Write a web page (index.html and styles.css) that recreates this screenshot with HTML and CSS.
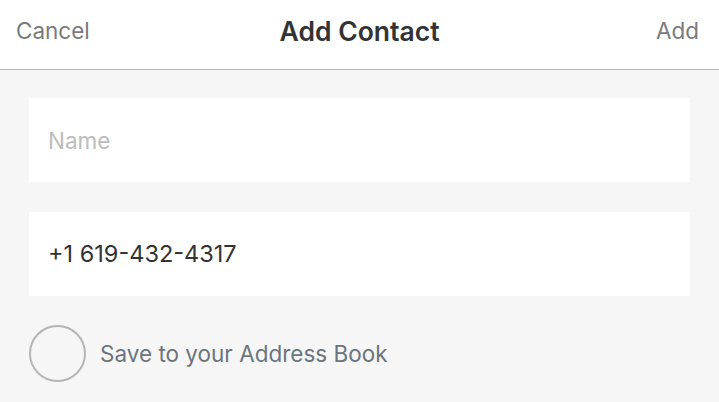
FILE: index.html
```html
<!DOCTYPE html>
<html>
<head>
<meta charset="utf-8">
<link rel="stylesheet" href="styles.css">
</head>
<body>
<div class="screen">
  <header class="nav">
    <span class="nav-btn nav-left">Cancel</span>
    <span class="nav-title">Add Contact</span>
    <span class="nav-btn nav-right">Add</span>
  </header>
  <main class="content">
    <div class="field"><span class="placeholder">Name</span></div>
    <div class="field"><span class="value">+1 619-432-4317</span></div>
    <label class="save-row">
      <span class="check"></span>
      <span class="save-text">Save to your Address Book</span>
    </label>
  </main>
</div>
</body>
</html>
```
FILE: styles.css
```css
html, body {
  margin: 0;
  padding: 0;
}
body {
  font-family: Inter, "Liberation Sans", sans-serif;
  background: #f6f6f6;
  width: 719px;
  height: 402px;
  overflow: hidden;
}
.screen {
  display: flex;
  flex-direction: column;
  height: 402px;
}
.nav {
  background: #fff;
  border-bottom: 1px solid #b4b4b4;
  display: grid;
  grid-template-columns: 1fr auto 1fr;
  align-items: center;
  padding: 0 20px 8px 16px;
  box-sizing: border-box;
  height: 70px;
}
.nav-btn {
  font-size: 22.5px;
  color: #7a7a7a;
}
.nav-left { justify-self: start; }
.nav-right { justify-self: end; }
.nav-title {
  font-size: 26.5px;
  font-weight: 600;
  color: #333;
  margin-left: 4px;
}
.content {
  padding: 28px 29px 0 29px;
  display: flex;
  flex-direction: column;
  gap: 30px;
}
.field {
  background: #fff;
  height: 84px;
  display: flex;
  align-items: center;
  padding-left: 19px;
  box-sizing: border-box;
}
.placeholder {
  font-size: 22.5px;
  color: #bcbcbc;
}
.value {
  font-size: 23.5px;
  color: #333;
  margin-top: -2px;
}
.save-row {
  display: flex;
  align-items: center;
  gap: 14px;
  margin-top: -1px;
}
.check {
  width: 53px;
  height: 53px;
  border: 2px solid #b5b5b5;
  border-radius: 50%;
}
.save-text {
  font-size: 22.5px;
  color: #6c747c;
}
```
